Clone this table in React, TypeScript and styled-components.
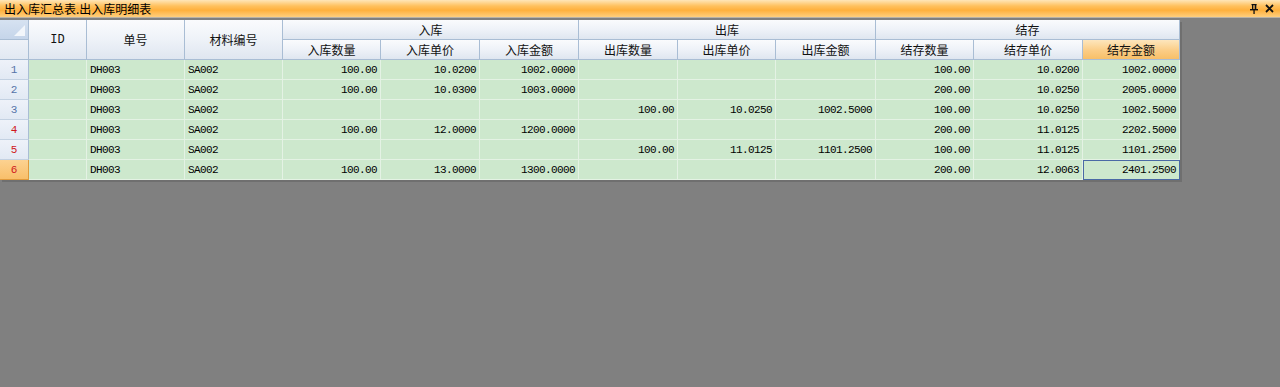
import styled, { createGlobalStyle } from "styled-components";

const GlobalStyle = createGlobalStyle`
  html, body {
    margin: 0;
    padding: 0;
    background: #808080;
  }
  body {
    font-family: "Noto Sans CJK SC", "Liberation Sans", sans-serif;
    font-size: 12px;
  }
`;

const Page = styled.div`
  width: 1280px;
  height: 387px;
  background: #808080;
  display: flex;
  flex-direction: column;
  overflow: hidden;
`;

const TitleBar = styled.div`
  display: flex;
  align-items: center;
  justify-content: space-between;
  padding: 0 6px 0 4px;
  background: linear-gradient(#ffe6b8 0%, #ffc15e 35%, #ffb03c 60%, #ffcf7e 100%);
  border-bottom: 1px solid #b9b2a6;
  box-sizing: border-box;
  height: 18px;
`;

const TitleText = styled.span`
  font-size: 12px;
  line-height: 16px;
  color: #000;
`;

const TitleIcons = styled.div`
  display: flex;
  align-items: center;
  gap: 7px;
`;

const GridWrap = styled.div`
  padding-top: 2px;
  display: flex;
`;

const Grid = styled.table`
  table-layout: fixed;
  border-collapse: separate;
  border-spacing: 0;
  width: 1180px;
  background: #cde8cd;
  box-shadow: 2px 2px 0 #6f6f6f;
`;

const HeadCell = styled.th<{ $hot?: boolean; $mono?: boolean }>`
  height: 19px;
  padding: 0;
  font-weight: normal;
  font-size: 12px;
  font-family: ${(p) =>
    p.$mono ? '"Liberation Mono", monospace' : '"Noto Sans CJK SC", "Liberation Sans", sans-serif'};
  color: #111;
  text-align: center;
  white-space: nowrap;
  background: ${(p) =>
    p.$hot
      ? "linear-gradient(#fde6bd, #fbcd86 55%, #f8bf68)"
      : "linear-gradient(#fafbfd, #eef2f8 50%, #dfe6f0)"};
  border-right: 1px solid #a9bdd4;
  border-bottom: 1px solid #a9bdd4;
`;

const Corner = styled.th`
  padding: 0;
  position: relative;
  background: linear-gradient(#d6e2f1, #c5d5ea);
  border-right: 1px solid #a9bdd4;
  border-bottom: 1px solid #a9bdd4;
`;

const CornerMark = styled.span`
  position: absolute;
  right: 3px;
  bottom: 3px;
  width: 0;
  height: 0;
  border-left: 11px solid transparent;
  border-bottom: 11px solid #f2f6fb;
`;

const IndicatorHead = styled.th`
  padding: 0;
  background: linear-gradient(#eef2f8, #e1e8f2);
  border-right: 1px solid #a9bdd4;
  border-bottom: 1px solid #a9bdd4;
`;

const RowNum = styled.td<{ $red?: boolean; $current?: boolean }>`
  height: 19px;
  padding: 0;
  text-align: center;
  font-family: "Liberation Mono", monospace;
  font-size: 11px;
  color: ${(p) => (p.$red ? "#d0181c" : "#5574a8")};
  background: ${(p) =>
    p.$current ? "linear-gradient(#fcd291, #f8bf6a)" : "linear-gradient(#eef2f9, #e2e9f4)"};
  border-right: 1px solid ${(p) => (p.$current ? "#e09a3c" : "#a9bdd4")};
  border-bottom: 1px solid ${(p) => (p.$current ? "#e09a3c" : "#c3d1e2")};
`;

const Cell = styled.td<{ $num?: boolean; $focus?: boolean }>`
  height: 19px;
  padding: ${(p) => (p.$num ? "0 3px 0 0" : "0 0 0 3px")};
  box-sizing: border-box;
  text-align: ${(p) => (p.$num ? "right" : "left")};
  font-family: "Liberation Mono", monospace;
  font-size: 11px;
  letter-spacing: -0.6px;
  color: #000;
  white-space: nowrap;
  overflow: hidden;
  background: #cde8cd;
  border-right: 1px solid #e4f2e4;
  border-bottom: 1px solid #e4f2e4;
  outline: ${(p) => (p.$focus ? "1px solid #4a6aa5" : "none")};
  outline-offset: -1px;
`;

const widths = [29, 58, 98, 98, 98, 99, 99, 99, 98, 100, 98, 109, 97];

const groups = [
  { title: "入库", cols: ["入库数量", "入库单价", "入库金额"] },
  { title: "出库", cols: ["出库数量", "出库单价", "出库金额"] },
  { title: "结存", cols: ["结存数量", "结存单价", "结存金额"] },
];

const rows: string[][] = [
  ["100.00", "10.0200", "1002.0000", "", "", "", "100.00", "10.0200", "1002.0000"],
  ["100.00", "10.0300", "1003.0000", "", "", "", "200.00", "10.0250", "2005.0000"],
  ["", "", "", "100.00", "10.0250", "1002.5000", "100.00", "10.0250", "1002.5000"],
  ["100.00", "12.0000", "1200.0000", "", "", "", "200.00", "11.0125", "2202.5000"],
  ["", "", "", "100.00", "11.0125", "1101.2500", "100.00", "11.0125", "1101.2500"],
  ["100.00", "13.0000", "1300.0000", "", "", "", "200.00", "12.0063", "2401.2500"],
];

function PinIcon() {
  return (
    <svg width="8" height="10" viewBox="0 0 8 10">
      <rect x="0" y="5" width="8" height="1.4" fill="#111" />
      <rect x="1.5" y="0" width="5" height="1.2" fill="#111" />
      <rect x="2" y="0" width="1.3" height="5.5" fill="#111" />
      <rect x="4.7" y="0" width="1.6" height="5.5" fill="#111" />
      <rect x="3.4" y="6" width="1.3" height="4" fill="#111" />
    </svg>
  );
}

function CloseIcon() {
  return (
    <svg width="9" height="9" viewBox="0 0 9 9">
      <path d="M1 1 L8 8 M8 1 L1 8" stroke="#111" strokeWidth="1.8" />
    </svg>
  );
}

export default function App() {
  return (
    <Page>
      <GlobalStyle />
      <TitleBar>
        <TitleText>出入库汇总表.出入库明细表</TitleText>
        <TitleIcons>
          <PinIcon />
          <CloseIcon />
        </TitleIcons>
      </TitleBar>
      <GridWrap>
        <Grid>
          <colgroup>
            {widths.map((w, i) => (
              <col key={i} style={{ width: w }} />
            ))}
          </colgroup>
          <thead>
            <tr>
              <Corner>
                <CornerMark />
              </Corner>
              <HeadCell rowSpan={2} $mono>
                ID
              </HeadCell>
              <HeadCell rowSpan={2}>单号</HeadCell>
              <HeadCell rowSpan={2}>材料编号</HeadCell>
              {groups.map((g) => (
                <HeadCell key={g.title} colSpan={3}>
                  {g.title}
                </HeadCell>
              ))}
            </tr>
            <tr>
              <IndicatorHead />
              {groups.flatMap((g) =>
                g.cols.map((c) => (
                  <HeadCell key={c} $hot={c === "结存金额"}>
                    {c}
                  </HeadCell>
                ))
              )}
            </tr>
          </thead>
          <tbody>
            {rows.map((r, i) => (
              <tr key={i}>
                <RowNum $red={i >= 3} $current={i === 5}>
                  {i + 1}
                </RowNum>
                <Cell />
                <Cell>DH003</Cell>
                <Cell>SA002</Cell>
                {r.map((v, j) => (
                  <Cell key={j} $num $focus={i === 5 && j === 8}>
                    {v}
                  </Cell>
                ))}
              </tr>
            ))}
          </tbody>
        </Grid>
      </GridWrap>
    </Page>
  );
}
